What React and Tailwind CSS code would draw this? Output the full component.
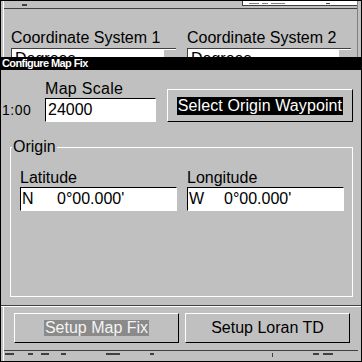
import React from 'react';

const font = "font-['Liberation_Sans',Arial,sans-serif]";

const Sunken = ({ className = '', children }) => (
  <div className={`bg-white border-t border-l border-black border-r border-b border-r-white border-b-white ${className}`}>
    {children}
  </div>
);

const Raised = ({ className = '', children }) => (
  <div className={`border border-t-white border-l-white border-r-black border-b-black flex items-center justify-center ${className}`}>
    {children}
  </div>
);

// partial dropdown of the window behind, cut off by the dialog
const Dropdown = ({ w }) => (
  <div className={`${w} h-[9px] overflow-hidden bg-white border-t border-l border-[#404040] flex justify-between`}>
    <span className="pl-[3px] pt-[1px] text-[16px] leading-[18px]">Degrees</span>
    <div className="w-[13px] h-full bg-[#c0c0c0] border-l border-t border-white" />
  </div>
);

export default function App() {
  return (
    <div className={`w-[362px] h-[362px] bg-[#c0c0c0] border border-black flex flex-col overflow-hidden text-black ${font}`}>
      {/* behind window, top part */}
      <div className="h-[56px] ml-[2px] mr-[3px] border-l border-r border-l-white border-r-[#808080] flex flex-col">
        <div className="h-[8px] border-b border-[#404040] flex">
          <div className="ml-[18px] mt-[3px] w-[5px] h-[2px] bg-[#404040]" />
          <div className="ml-auto w-[115px] h-[5px] bg-white border-l border-b border-[#404040] flex items-end gap-[3px] pl-[6px] pb-px">
            <span className="w-[10px] h-px bg-[#808080]" />
            <span className="w-[6px] h-px bg-[#808080]" />
            <span className="w-[14px] h-px bg-[#808080]" />
            <span className="ml-[38px] w-[4px] h-px bg-[#404040]" />
          </div>
        </div>
        <div className="mt-[20px] flex pl-[7px] gap-[11px] text-[16px] leading-[18px]">
          <span className="w-[165px]">Coordinate System 1</span>
          <span className="w-[164px]">Coordinate System 2</span>
        </div>
        <div className="mt-[1px] flex pl-[7px] gap-[11px]">
          <Dropdown w="w-[165px]" />
          <Dropdown w="w-[164px]" />
        </div>
      </div>

      {/* Configure Map Fix dialog */}
      <div className="flex flex-col">
        <div className="h-[13px] bg-black text-white font-bold text-[11px] leading-[13px] tracking-[-0.6px] pl-[1px]">
          Configure Map Fix
        </div>
        <div className="h-[235px] flex flex-col pt-[10px]">
          <div className="flex items-end">
            <div className="flex flex-col">
              <span className="pl-[44px] text-[16px] leading-[18px] tracking-[0.3px]">Map Scale</span>
              <div className="flex items-center">
                <span className="w-[44px] pl-[1px] text-[14px] leading-[16px] tracking-[0.5px]">1:00</span>
                <Sunken className="w-[111px] h-[24px] flex items-center pl-[2px] text-[16px] leading-[18px]">24000</Sunken>
              </div>
            </div>
            <Raised className="ml-[11px] w-[186px] h-[33px]">
              <span className="bg-black text-white px-[1px] text-[16px] leading-[18px] tracking-[0.1px]">Select Origin Waypoint</span>
            </Raised>
          </div>

          <div className="relative mt-[25px] ml-[9px] w-[343px] h-[150px] border border-white">
            <span className="absolute -top-[10px] left-[1px] px-[1px] bg-[#c0c0c0] text-[16px] leading-[18px]">Origin</span>
            <div className="pt-[21px] pl-[9px] flex gap-[10px]">
              <div className="w-[157px] flex flex-col">
                <span className="text-[16px] leading-[18px]">Latitude</span>
                <Sunken className="h-[24px] flex items-center pl-[1px] text-[16px] leading-[18px]">
                  <span className="w-[35px]">N</span>
                  <span>0°00.000'</span>
                </Sunken>
              </div>
              <div className="w-[157px] flex flex-col">
                <span className="text-[16px] leading-[18px]">Longitude</span>
                <Sunken className="h-[24px] flex items-center pl-[1px] text-[16px] leading-[18px]">
                  <span className="w-[35px]">W</span>
                  <span>0°00.000'</span>
                </Sunken>
              </div>
            </div>
          </div>
        </div>
        <div className="h-px bg-[#404040]" />
        <div className="h-px bg-white" />
      </div>

      {/* behind window, bottom part */}
      <div className="flex-1 ml-[2px] mr-[3px] border-l border-white flex flex-col">
        <div className="mt-[6px] flex pl-[10px] gap-[6px] text-[16px] leading-[18px]">
          <Raised className="w-[165px] h-[30px]">
            <span className="bg-[#8a8a8a] text-[#f4f4f4] px-[1px] leading-[16px]">Setup Map Fix</span>
          </Raised>
          <Raised className="w-[165px] h-[30px]">
            <span className="px-[1px]">Setup Loran TD</span>
          </Raised>
        </div>
        <div className="mt-[7px] h-px bg-[#404040]" />
        <div className="mt-[2px] flex items-start">
          <span className="ml-[1px] w-[9px] h-[2px] bg-[#404040]" />
          <span className="ml-[14px] w-[5px] h-[2px] bg-[#404040]" />
          <span className="ml-[8px] w-[8px] h-[2px] bg-[#404040]" />
          <span className="ml-[12px] w-[5px] h-[2px] bg-[#404040]" />
          <span className="ml-[40px] w-[14px] h-[2px] bg-[#404040]" />
          <span className="ml-[30px] w-[4px] h-[2px] bg-[#404040]" />
          <span className="ml-[118px] w-px h-[4px] bg-[#404040]" />
          <span className="ml-[40px] w-[6px] h-[2px] bg-[#404040]" />
          <span className="ml-[4px] w-[10px] h-[2px] bg-[#404040]" />
        </div>
      </div>
    </div>
  );
}
